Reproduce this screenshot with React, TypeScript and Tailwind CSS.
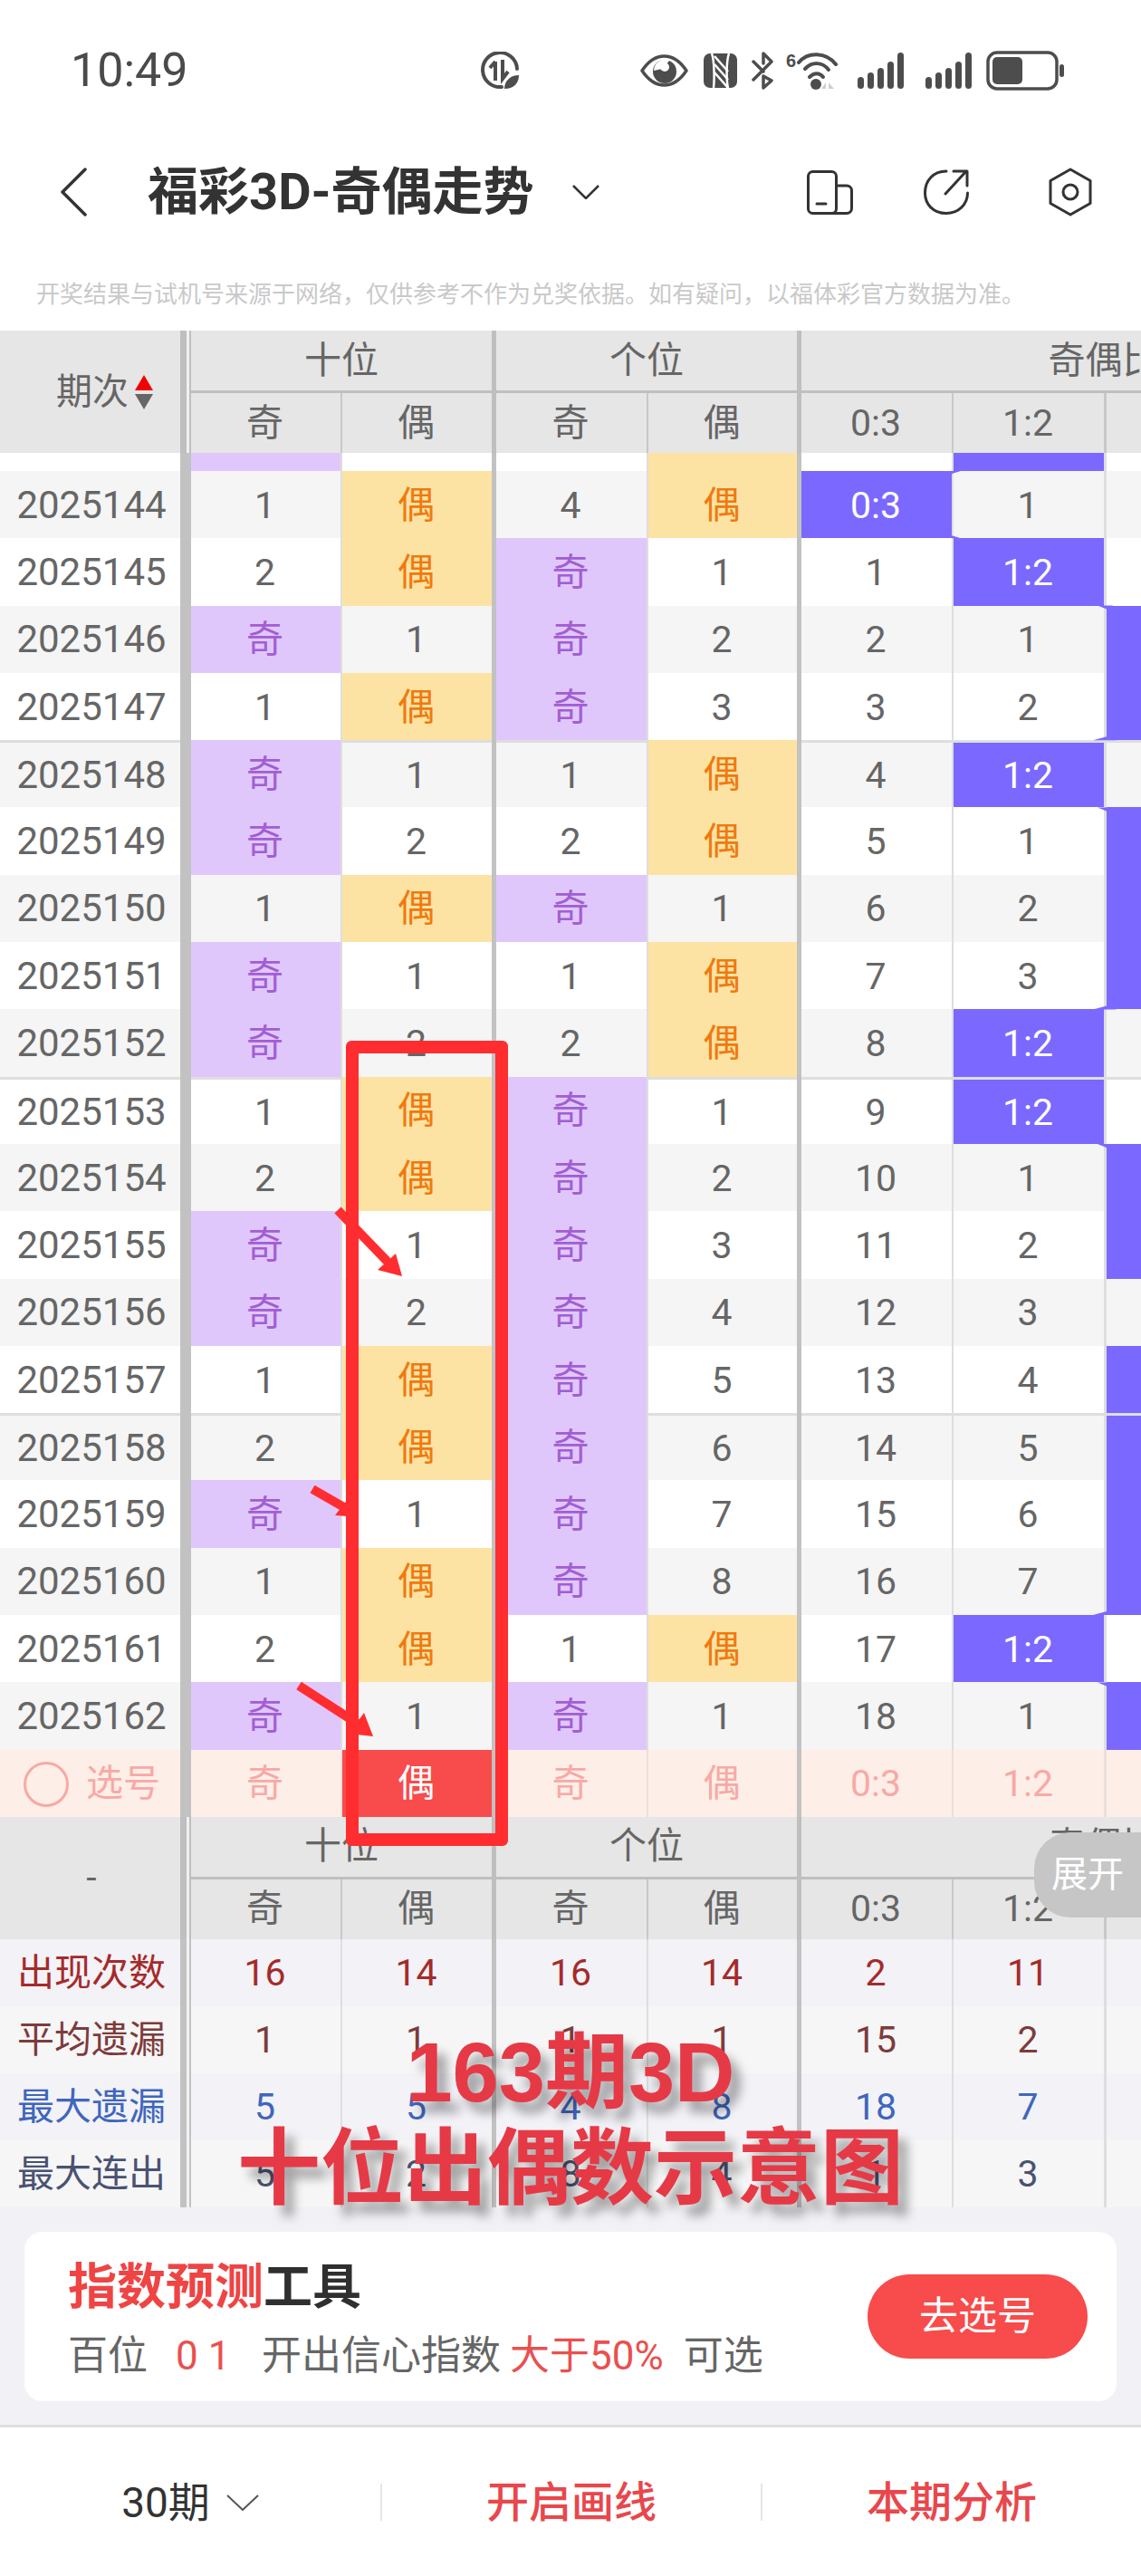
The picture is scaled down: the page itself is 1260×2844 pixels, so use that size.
import React from "react";

const GRID =
  "grid grid-cols-[199px_12px_165px_2px_165px_5px_166px_2px_164px_5px_166px_2px_166px_3px_38px]";

type Row = [string, string, string, string, string, string, string, boolean];

const rows: Row[] = [
  ["2025144", "1", "偶", "4", "偶", "0:3", "1", false],
  ["2025145", "2", "偶", "奇", "1", "1", "1:2", false],
  ["2025146", "奇", "1", "奇", "2", "2", "1", true],
  ["2025147", "1", "偶", "奇", "3", "3", "2", true],
  ["2025148", "奇", "1", "1", "偶", "4", "1:2", false],
  ["2025149", "奇", "2", "2", "偶", "5", "1", true],
  ["2025150", "1", "偶", "奇", "1", "6", "2", true],
  ["2025151", "奇", "1", "1", "偶", "7", "3", true],
  ["2025152", "奇", "2", "2", "偶", "8", "1:2", false],
  ["2025153", "1", "偶", "奇", "1", "9", "1:2", false],
  ["2025154", "2", "偶", "奇", "2", "10", "1", true],
  ["2025155", "奇", "1", "奇", "3", "11", "2", true],
  ["2025156", "奇", "2", "奇", "4", "12", "3", false],
  ["2025157", "1", "偶", "奇", "5", "13", "4", true],
  ["2025158", "2", "偶", "奇", "6", "14", "5", true],
  ["2025159", "奇", "1", "奇", "7", "15", "6", true],
  ["2025160", "1", "偶", "奇", "8", "16", "7", true],
  ["2025161", "2", "偶", "1", "偶", "17", "1:2", false],
  ["2025162", "奇", "1", "奇", "1", "18", "1", true],
];

const ROW_H = 74.3;
const ROW0 = 520;

function Cell({ v, bg, line }: { v: string; bg: string; line: boolean }) {
  if (v === "奇") {
    return <div className="flex items-center justify-center bg-[#e0c7fb] pr-[2px] pt-[2px] text-[#a25ed3]">奇</div>;
  }
  if (v === "偶") {
    return <div className="flex items-center justify-center bg-[#fde3a3] pr-[2px] pt-[2px] text-[#f0790f]">偶</div>;
  }
  if (v === "0:3" || v === "1:2") {
    return (
      <div className={`flex items-center justify-center bg-[#7b68ff] pr-[2px] pt-[2px] text-white ${line ? "border-t-[3px] border-[#dedede]" : ""}`}>
        {v}
      </div>
    );
  }
  return (
    <div className={`flex items-center justify-center pr-[2px] pt-[2px] ${bg} ${line ? "border-t-[3px] border-[#dedede]" : ""}`}>{v}</div>
  );
}

function DataRow({ r, i }: { r: Row; i: number }) {
  const bg = i % 2 === 0 ? "bg-[#f5f5f5]" : "bg-white";
  const line = i === 4 || i === 9 || i === 14;
  const thin = "bg-[#dedede]";
  const major = "bg-[#c2c2c2]";
  return (
    <div className={`${GRID} h-[74.3px] text-[#666666]`}>
      <div className={`flex items-center justify-center pl-[3px] pt-[1px] text-[42px] ${bg} ${line ? "border-t-[3px] border-[#dedede]" : ""}`}>{r[0]}</div>
      <div className={major} />
      <Cell v={r[1]} bg={bg} line={line} />
      <div className={thin} />
      <Cell v={r[2]} bg={bg} line={line} />
      <div className={major} />
      <Cell v={r[3]} bg={bg} line={line} />
      <div className={thin} />
      <Cell v={r[4]} bg={bg} line={line} />
      <div className={major} />
      <Cell v={r[5]} bg={bg} line={line} />
      <div className={thin} />
      <Cell v={r[6]} bg={bg} line={line} />
      <div className={thin} />
      {r[7] ? (
        <div className={`bg-[#7b68ff] ${line ? "border-t-[3px] border-[#dedede]" : ""}`} />
      ) : (
        <div className={`${bg} ${line ? "border-t-[3px] border-[#dedede]" : ""}`} />
      )}
    </div>
  );
}

function HeadSep() {
  return (
    <div className="row-span-3 flex">
      <div className="w-[7px] bg-[#bfbfbf]" />
      <div className="w-[3px] bg-[#f0f0f0]" />
      <div className="w-[2px] bg-[#bfbfbf]" />
    </div>
  );
}

function TableHead({ children }: { children: React.ReactNode }) {
  const major = "row-span-3 bg-[#bfbfbf]";
  const sub = "flex items-center justify-center bg-[#e6e6e6] pr-[2px]";
  const thin = "bg-[#c8c8c8]";
  return (
    <div className={`${GRID} grid-rows-[66px_3px_66px] bg-[#e6e6e6] text-[#666666]`}>
      <div className="row-span-3 bg-[#e6e6e6]">{children}</div>
      <HeadSep />
      <div className="col-span-3 flex items-center justify-center">十位</div>
      <div className={major} />
      <div className="col-span-3 flex items-center justify-center">个位</div>
      <div className={major} />
      <div className="col-span-5 flex items-start justify-start overflow-hidden">
        <div className="flex h-[66px] w-[668px] shrink-0 items-center justify-center">奇偶比</div>
      </div>
      <div className="col-span-3 bg-[#bfbfbf]" />
      <div className="col-span-3 bg-[#bfbfbf]" />
      <div className="col-span-5 bg-[#bfbfbf]" />
      <div className={sub}>奇</div>
      <div className={thin} />
      <div className={sub}>偶</div>
      <div className={sub}>奇</div>
      <div className={thin} />
      <div className={sub}>偶</div>
      <div className={sub}>0:3</div>
      <div className={thin} />
      <div className={sub}>1:2</div>
      <div className={thin} />
      <div className="bg-[#e6e6e6]" />
    </div>
  );
}

function StatRow({ label, vals, color, alt }: { label: string; vals: string[]; color: string; alt: boolean }) {
  const bg = alt ? "bg-[#f2f2f7]" : "bg-[#f6f6f7]";
  const c = `flex items-center justify-center pr-[2px] pt-[2px] ${bg}`;
  const thin = "bg-[#dedede]";
  const major = "bg-[#c2c2c2]";
  return (
    <div className={`${GRID} h-[74px] ${color}`}>
      <div className={`flex items-center justify-center pl-[3px] pt-[2px] ${bg}`}>{label}</div>
      <div className="flex">
        <div className="w-[7px] bg-[#c2c2c2]" />
        <div className="w-[3px] bg-[#f2f2f2]" />
        <div className="w-[2px] bg-[#c2c2c2]" />
      </div>
      <div className={c}>{vals[0]}</div>
      <div className={thin} />
      <div className={c}>{vals[1]}</div>
      <div className={major} />
      <div className={c}>{vals[2]}</div>
      <div className={thin} />
      <div className={c}>{vals[3]}</div>
      <div className={major} />
      <div className={c}>{vals[4]}</div>
      <div className={thin} />
      <div className={c}>{vals[5]}</div>
      <div className={thin} />
      <div className={bg} />
    </div>
  );
}

function SelectRow() {
  const c = "flex items-center justify-center pr-[2px] pt-[2px]";
  const thin = "bg-[#eadfdb]";
  const major = "bg-[#c2c2c2]";
  return (
    <div className={`${GRID} h-[74px] bg-[#feeee8] text-[#f8a9a5]`}>
      <div className="flex items-center pl-[26px] pt-[2px]">
        <div className="h-[50px] w-[50px] rounded-full border-[3px] border-[#f8a9a5]" />
        <span className="ml-[19px]">选号</span>
      </div>
      <div className={major} />
      <div className={c}>奇</div>
      <div className={thin} />
      <div className={`${c} bg-[#f84b4b] text-white`}>偶</div>
      <div className={major} />
      <div className={c}>奇</div>
      <div className={thin} />
      <div className={c}>偶</div>
      <div className={major} />
      <div className={c}>0:3</div>
      <div className={thin} />
      <div className={c}>1:2</div>
      <div className={thin} />
      <div />
    </div>
  );
}

const G = "#4d4d4d";

function LeafClock() {
  return (
    <svg width="45" height="42" viewBox="0 0 45 42" fill="none">
      <path d="M24 39 A19 19 0 1 1 41 19" stroke={G} strokeWidth="4" strokeLinecap="round" />
      <path d="M17 32 V11 M17 11 L11 18" stroke={G} strokeWidth="4" />
      <path d="M25 9 V30 L31 22" stroke={G} strokeWidth="4" />
      <path d="M27 41 C27 32 34 26 43 26 C43 35 37 41 27 41 Z" fill={G} />
    </svg>
  );
}

function Eye() {
  return (
    <svg width="53" height="36" viewBox="0 0 53 36" fill="none">
      <path d="M2 18 C10 6 18 2 26.500 2 C35 2 43 6 51 18 C43 30 35 34 26.500 34 C18 34 10 30 2 18 Z" stroke={G} strokeWidth="3.500" strokeLinejoin="round" />
      <circle cx="27" cy="19" r="13" fill={G} />
      <path d="M15 18 A12 12 0 0 1 22 7 L26 5 L34 5 L24 16 Z" fill="#fff" />
      <circle cx="27" cy="14" r="5" fill="#fff" />
    </svg>
  );
}

function Nfc() {
  return (
    <svg width="37" height="38" viewBox="0 0 37 38">
      <rect width="37" height="38" rx="7" fill={G} />
      <path d="M9 0 C12 8 12 30 11 38" stroke="#fff" strokeWidth="2.500" fill="none" />
      <path d="M28 0 C25 8 25 30 27 38" stroke="#fff" strokeWidth="2.500" fill="none" />
      <path d="M12 3 L27 20 M12 12 L27 29 M12 21 L27 38" stroke="#fff" strokeWidth="2.500" />
    </svg>
  );
}

function Bt() {
  return (
    <svg width="25" height="42" viewBox="0 0 25 42" fill="none">
      <path d="M2 11 L13 22 M2 31 L22 11 L13 2 V13 M13 27 L22 32 L13 40 V27" stroke={G} strokeWidth="3.500" strokeLinejoin="round" strokeLinecap="round" />
    </svg>
  );
}

function Wifi() {
  return (
    <svg width="57" height="44" viewBox="0 0 57 44" fill="none">
      <text x="0" y="18" fontSize="20" fontWeight="700" fill={G} fontFamily="'Liberation Sans', sans-serif">6</text>
      <path d="M14 13 C24 1 44 1 55 15" stroke={G} strokeWidth="4" strokeLinecap="round" />
      <path d="M21 20 C29 12 40 12 47 21" stroke={G} strokeWidth="4" strokeLinecap="round" />
      <path d="M26 29 C31 24 37 24 41 29" stroke={G} strokeWidth="4" strokeLinecap="round" />
      <circle cx="33" cy="37" r="6" fill={G} />
      <path d="M44 35 V42 H39 Z M47 35 V42 H53 Z" fill="#cfcfcf" />
    </svg>
  );
}

function Signal() {
  return (
    <svg width="51" height="40" viewBox="0 0 51 40" fill={G}>
      <rect x="0" y="27" width="7" height="13" rx="3.500" />
      <rect x="11" y="22" width="7" height="18" rx="3.500" />
      <rect x="22" y="17" width="7" height="23" rx="3.500" />
      <rect x="33" y="10" width="7" height="30" rx="3.500" />
      <rect x="44" y="0" width="7" height="40" rx="3.500" />
    </svg>
  );
}

function Battery() {
  return (
    <svg width="87" height="44" viewBox="0 0 87 44" fill="none">
      <rect x="2" y="2" width="76" height="40" rx="10" stroke={G} strokeWidth="3.500" />
      <rect x="7" y="7" width="33" height="30" rx="5" fill={G} />
      <rect x="81" y="15" width="5" height="14" rx="2.500" fill={G} />
    </svg>
  );
}

const INK = "#333333";

function PhoneIcon() {
  return (
    <svg width="51" height="49" viewBox="0 0 51 49" fill="none" stroke={INK} strokeWidth="3" strokeLinejoin="round">
      <rect x="1.500" y="1.500" width="31" height="46" rx="5" />
      <path d="M32.500 17 H44 A5.500 5.500 0 0 1 49.500 22.500 V42 A5.500 5.500 0 0 1 44 47.500 H28" />
      <path d="M11 37 H21" strokeLinecap="round" />
    </svg>
  );
}

function ShareIcon() {
  return (
    <svg width="50" height="50" viewBox="0 0 50 50" fill="none" stroke={INK} strokeWidth="3" strokeLinecap="round" strokeLinejoin="round">
      <path d="M25 2 C11 2 1.500 12 1.500 26 C1.500 39 11 48.500 25 48.500 C38 48.500 48.500 39 48.500 26" />
      <path d="M24 27 L47 2 M33 2 H48 V18" />
    </svg>
  );
}

function HexIcon() {
  return (
    <svg width="48" height="54" viewBox="0 0 48 54" fill="none" stroke={INK} strokeWidth="3" strokeLinejoin="round">
      <path d="M24 2 L46 14.500 V39.500 L24 52 L2 39.500 V14.500 Z" />
      <circle cx="24" cy="27" r="8" />
    </svg>
  );
}

function Overlay() {
  const wedgeYs = (i: number) => ROW0 + i * ROW_H;
  const blue = "#7b68ff";
  const down = [2, 5, 10, 18];
  const upw = [4, 8, 17];
  return (
    <svg className="pointer-events-none absolute left-0 top-0" width="1260" height="2844" viewBox="0 0 1260 2844">
      <polygon points={`1051,${ROW0 + 3} 1051,${ROW0} 1061,${ROW0}`} fill={blue} />
      <polygon points={`1051,${ROW0 + ROW_H - 3} 1051,${ROW0 + ROW_H} 1061,${ROW0 + ROW_H}`} fill={blue} />
      {down.map((i) => (
        <polygon key={`d${i}`} points={`1212,${wedgeYs(i)} 1229,${wedgeYs(i)} 1222,${wedgeYs(i) + 4}`} fill={blue} />
      ))}
      {upw.map((i) => (
        <polygon key={`u${i}`} points={`1207,${wedgeYs(i)} 1233,${wedgeYs(i)} 1222,${wedgeYs(i) - 4}`} fill={blue} />
      ))}
      <g fill="#ff2d30" stroke="none">
        <line x1="373" y1="1336" x2="428" y2="1393" stroke="#ff2d30" strokeWidth="10" />
        <polygon points="444,1409 417,1402 437,1384" />
        <line x1="345" y1="1644" x2="385" y2="1667" stroke="#ff2d30" strokeWidth="10" />
        <polygon points="396,1675 370,1673 384,1655" />
        <line x1="330" y1="1861" x2="398" y2="1905" stroke="#ff2d30" strokeWidth="10" />
        <polygon points="412,1917 385,1914 402,1891" />
      </g>
    </svg>
  );
}

export default function App() {
  return (
    <div className="relative h-[2844px] w-[1260px] overflow-hidden bg-white font-['Roboto','Noto_Sans_CJK_SC',sans-serif] text-[42px] leading-none">
      {/* status bar */}
      <div className="flex h-[156px] items-center pl-[78px]">
        <span className="w-[129px] text-[52px] text-[#4a4a4a]">10:49</span>
        <div className="ml-[323px]"><LeafClock /></div>
        <div className="ml-[132px]"><Eye /></div>
        <div className="ml-[17px]"><Nfc /></div>
        <div className="ml-[16px]"><Bt /></div>
        <div className="ml-[13px]"><Wifi /></div>
        <div className="ml-[22px]"><Signal /></div>
        <div className="ml-[24px]"><Signal /></div>
        <div className="ml-[16px]"><Battery /></div>
      </div>

      {/* nav bar */}
      <div className="flex h-[112px] items-center pl-[66px]">
        <svg width="30" height="54" viewBox="0 0 30 54" fill="none">
          <path d="M28 2 L3 27 L28 52" stroke={INK} strokeWidth="3.500" strokeLinecap="round" strokeLinejoin="round" />
        </svg>
        <span className="ml-[67px] w-[422px] whitespace-nowrap text-[56px] font-bold text-[#333333]">福彩3D-奇偶走势</span>
        <svg className="ml-[47px]" width="30" height="16" viewBox="0 0 30 16" fill="none">
          <path d="M1 1 L15 15 L29 1" stroke={INK} strokeWidth="2.500" />
        </svg>
        <div className="ml-[229px]"><PhoneIcon /></div>
        <div className="ml-[78px]"><ShareIcon /></div>
        <div className="ml-[88px]"><HexIcon /></div>
      </div>

      {/* notice */}
      <div className="flex h-[97px] items-center whitespace-nowrap pl-[40px] pt-[17px] text-[26px] text-[#c9c9c9]">
        开奖结果与试机号来源于网络，仅供参考不作为兑奖依据。如有疑问，以福体彩官方数据为准。
      </div>

      {/* table */}
      <div className="text-[41px]">
        <TableHead>
          <div className="flex h-full items-center pl-[62px]">
            <span className="text-[40px]">期次</span>
            <div className="ml-[7px] flex flex-col gap-[4px]">
              <div className="h-0 w-0 border-x-[10px] border-b-[17px] border-x-transparent border-b-[#f40000]" />
              <div className="h-0 w-0 border-x-[10px] border-t-[17px] border-x-transparent border-t-[#666666]" />
            </div>
          </div>
        </TableHead>

        <div className={`${GRID} h-[20px] bg-white`}>
          <div />
          <div className="bg-[#c2c2c2]" />
          <div className="bg-[#e0c7fb]" />
          <div className="bg-[#dedede]" />
          <div />
          <div className="bg-[#c2c2c2]" />
          <div />
          <div className="bg-[#dedede]" />
          <div className="bg-[#fde3a3]" />
          <div className="bg-[#c2c2c2]" />
          <div />
          <div className="bg-[#dedede]" />
          <div className="bg-[#7b68ff]" />
          <div className="bg-[#dedede]" />
          <div />
        </div>

        {rows.map((r, i) => (
          <DataRow key={r[0]} r={r} i={i} />
        ))}

        <SelectRow />

        <TableHead>
          <div className="flex h-full items-center justify-center pl-[3px]">-</div>
        </TableHead>

        <StatRow label="出现次数" vals={["16", "14", "16", "14", "2", "11"]} color="text-[#a52a2a]" alt />
        <StatRow label="平均遗漏" vals={["1", "1", "1", "1", "15", "2"]} color="text-[#7d3b3b]" alt={false} />
        <StatRow label="最大遗漏" vals={["5", "5", "4", "8", "18", "7"]} color="text-[#3f66bd]" alt />
        <StatRow label="最大连出" vals={["5", "2", "8", "4", "1", "3"]} color="text-[#4a5272]" alt={false} />
      </div>

      {/* tool card */}
      <div className="h-[240px] bg-[#f2f2f6] px-[27px] pt-[27px]">
        <div className="flex h-[187px] items-center justify-between rounded-[20px] bg-white pl-[48px] pr-[32px]">
          <div className="pt-[8px]">
            <div className="text-[54px] font-bold text-[#2f2f2f]">
              <span className="text-[#ef4444]">指数预测</span>工具
            </div>
            <div className="mt-[26px] flex text-[44px] text-[#666666]">
              <span>百位</span>
              <span className="ml-[31px] w-[95px] text-[#e95050]">0 1</span>
              <span>开出信心指数</span>
              <span className="ml-[10px] text-[#e95050]">大于50%</span>
              <span className="ml-[22px]">可选</span>
            </div>
          </div>
          <div className="flex h-[93px] w-[243px] items-center justify-center rounded-full bg-[#f84b4b] text-[43px] text-white">
            去选号
          </div>
        </div>
      </div>

      {/* footer */}
      <div className="grid h-[167px] grid-cols-3 items-center border-t-[3px] border-[#dedede] bg-white pt-[2px]">
        <div className="flex items-center justify-center text-[46px] text-[#333333]">
          30期
          <svg className="ml-[18px]" width="36" height="18" viewBox="0 0 36 18" fill="none">
            <path d="M1 1 L18 17 L35 1" stroke="#555555" strokeWidth="2" />
          </svg>
        </div>
        <div className="flex h-[41px] items-center justify-center border-l-2 border-[#e6e6e6] text-[47px] font-medium text-[#e8474c]">
          开启画线
        </div>
        <div className="flex h-[41px] items-center justify-center border-l-2 border-[#e6e6e6] text-[47px] font-medium text-[#e8474c]">
          本期分析
        </div>
      </div>

      <div className="absolute left-[382px] top-[1149px] h-[889px] w-[179px] rounded-[6px] border-[14px] border-[#ff2d30]" />

      <Overlay />

      <div className="absolute left-[1142px] top-[2023px] flex h-[94px] w-[118px] items-center justify-center rounded-l-[40px] bg-[#c6c6c6] text-[40px] text-white">
        展开
      </div>

      <div className="absolute left-[130px] top-[2230px] w-[1000px] text-center font-['Liberation_Sans','Noto_Sans_CJK_SC',sans-serif] text-[92px] font-bold text-[#e63946] [text-shadow:10px_12px_12px_rgba(0,0,0,0.35)]">
        <div className="h-[114px] leading-[116px]">163期3D</div>
        <div className="h-[100px] leading-[100px]">十位出偶数示意图</div>
      </div>
    </div>
  );
}
